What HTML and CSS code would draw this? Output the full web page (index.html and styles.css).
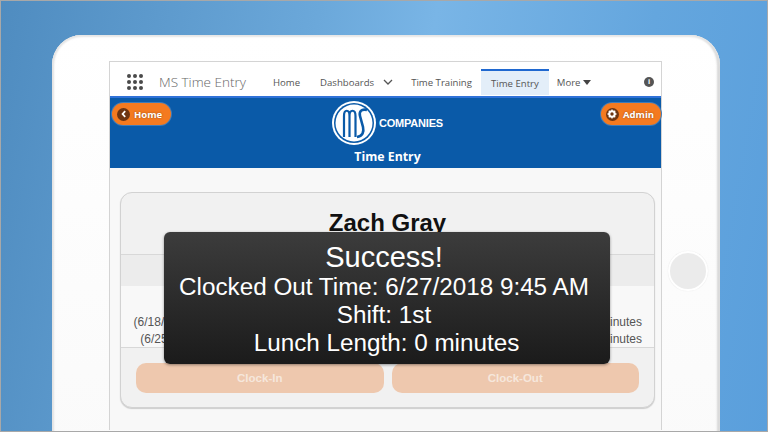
FILE: index.html
```html
<!DOCTYPE html>
<html lang="en">
<head>
    <meta charset="UTF-8">
    <meta name="viewport" content="width=device-width, initial-scale=1.0">
    <title>MS Time Entry</title>
    <link rel="stylesheet" href="styles.css">
</head>
<body>
    <div class="stage">
        <div class="tablet">
            <div class="screen">
                <nav class="nav">
                    <div class="launcher">
                        <i></i><i></i><i></i><i></i><i></i><i></i><i></i><i></i><i></i>
                    </div>
                    <span class="app-name">MS Time Entry</span>
                    <a class="nav-item nav-home">Home</a>
                    <a class="nav-item nav-dash">Dashboards
                        <svg class="chevron" width="10" height="6" viewBox="0 0 10 6"><path d="M1 1l4 4 4-4" fill="none" stroke="#555" stroke-width="1.3"/></svg>
                    </a>
                    <a class="nav-item nav-training">Time Training</a>
                    <a class="nav-item nav-active">Time Entry</a>
                    <a class="nav-item nav-more">More<span class="caret"></span></a>
                    <span class="info">i</span>
                </nav>
                <header class="banner">
                    <a class="pill pill-home">
                        <span class="pill-icon">
                            <svg width="8" height="8" viewBox="0 0 8 8"><path d="M5.2 1.2L2.6 4l2.6 2.8" fill="none" stroke="#fff" stroke-width="1.8"/></svg>
                        </span>Home</a>
                    <div class="brand">
                        <div class="brand-row">
                            <svg class="logo" width="44" height="44" viewBox="0 0 44 44">
                                <circle cx="22" cy="22" r="22" fill="#fff"/>
                                <circle cx="22" cy="22" r="20" fill="#0a5aa8"/>
                                <circle cx="22" cy="22" r="18.500" fill="#fff"/>
                                <path d="M12 36V15c0-7 5.500-7 5.500 0v21M17.500 15c0-7 6-7 6 0v21" fill="none" stroke="#0a5aa8" stroke-width="2.200"/>
                                <path d="M35 9c-6-1.500-8 2-7 6l3 11c1.200 5-.5 9.500-6 10" fill="none" stroke="#0a5aa8" stroke-width="2.600"/>
                            </svg>
                            <span class="brand-name">COMPANIES</span>
                        </div>
                        <h1 class="banner-title">Time Entry</h1>
                    </div>
                    <a class="pill pill-admin">
                        <span class="pill-icon">
                            <svg width="10" height="10" viewBox="0 0 10 10"><circle cx="5" cy="5" r="2.700" fill="none" stroke="#fff" stroke-width="2"/><path d="M5 .5v2M5 7.500v2M.5 5h2M7.500 5h2M1.800 1.800l1.400 1.400M6.800 6.800l1.400 1.400M8.200 1.800L6.800 3.200M3.200 6.800L1.800 8.200" stroke="#fff" stroke-width="1.300"/></svg>
                        </span>Admin</a>
                </header>
                <main class="content">
                    <section class="card">
                        <div class="card-name">Zach Gray</div>
                        <div class="card-band"></div>
                        <div class="card-weeks">
                            <span>(6/18/2018 - 6/24)</span><span>40 hours 0 minutes</span>
                            <span>(6/25/2018 - 7/1)</span><span>16 hours 0 minutes</span>
                        </div>
                        <div class="card-actions">
                            <button class="clock-btn">Clock-In</button>
                            <button class="clock-btn">Clock-Out</button>
                        </div>
                    </section>
                </main>
            </div>
            <div class="home-key"></div>
        </div>
        <div class="toast">
            <div class="toast-head">Success!</div>
            <div>Clocked Out Time: 6/27/2018 9:45 AM</div>
            <div>Shift: 1st</div>
            <div class="toast-last">Lunch Length: 0 minutes</div>
        </div>
    </div>
</body>
</html>
```

FILE: styles.css
```css
* { box-sizing: border-box; }
html, body { margin: 0; padding: 0; }
body { width: 768px; height: 432px; overflow: hidden; font-family: "Open Sans", sans-serif; }

.stage { position: relative; width: 768px; height: 432px; overflow: hidden; padding: 34px 0 0 51px; border: 1px solid #a8a8a8; background: linear-gradient(100deg, #4f8cc0 0%, #6ba8da 38%, #79b5e6 52%, #64a6de 78%, #5a9fdc 100%); }

.tablet { position: relative; width: 668px; height: 420px; padding: 26px 0 0 57px; background: linear-gradient(#fff, #fafafa); border-radius: 30px 30px 0 0; box-shadow: inset 0 2px 2px #e6e6e6, inset 2px 0 2px #e2e2e2, inset -3px 0 2px #d8d8d8; }
.screen { display: flex; flex-direction: column; width: 553px; height: 369px; background: #f8f8f8; border: 1px solid #d4d4d4; border-bottom: 0; }
.home-key { position: absolute; left: 616px; top: 216px; width: 40px; height: 40px; border-radius: 50%; background: #ebebeb; border: 2px solid #fff; box-shadow: 0 0 1px #ddd; }

.nav { display: flex; align-items: center; height: 34px; padding-top: 6px; background: #fff; flex: none; color: #555; font-size: 9.600px; }
.launcher { display: grid; grid-template-columns: repeat(3, 4px); gap: 2px; margin-left: 17px; }
.launcher i { width: 4px; height: 4px; border-radius: 50%; background: #4a4a4a; }
.app-name { margin-left: 16px; font-size: 13.500px; font-weight: 300; color: #666; white-space: nowrap; }
.nav-item { white-space: nowrap; }
.nav-home { margin-left: 27px; }
.nav-dash { margin-left: 20px; display: flex; align-items: center; }
.chevron { margin-left: 9px; }
.nav-training { margin-left: 18px; }
.nav-active { display: flex; align-items: center; align-self: flex-end; height: 26px; margin: 0 0 1px 9px; padding: 0 10px; background: #e3eef9; border-top: 2px solid #1f68d0; }
.nav-more { margin-left: 8px; }
.caret { display: inline-block; margin-left: 2px; border: 4px solid transparent; border-top: 5px solid #444; border-bottom: 0; vertical-align: 1px; }
.info { margin-left: auto; margin-right: 7px; width: 10px; height: 10px; border-radius: 50%; background: #555; color: #fff; font: 700 8px/10px "Liberation Sans", sans-serif; text-align: center; }

.banner { display: flex; align-items: flex-start; justify-content: space-between; height: 72px; flex: none; padding-top: 5px; background: #0a5aa8; border-top: 2px solid #2f72d8; }
.pill { display: flex; align-items: center; height: 22px; flex: none; color: #fff; font-size: 9.500px; font-weight: 700; background: #f47a20; text-shadow: 0 0 2px #8a4a18; box-shadow: 0 0 0 1px #3f7cb8; }
.pill-home { width: 59px; margin-left: 2px; padding-left: 5px; border-radius: 11px; }
.pill-admin { width: 60px; padding-left: 5px; border-radius: 11px; }
.pill-icon { display: flex; align-items: center; justify-content: center; width: 13px; height: 13px; margin-right: 4px; border-radius: 50%; background: #6e3512; }
.brand { display: flex; flex-direction: column; align-items: center; margin: -2px 0 0 3px; }
.brand-row { display: flex; align-items: center; height: 44px; }
.brand-name { margin-left: 3px; color: #fff; font: 700 11px "Liberation Sans", sans-serif; letter-spacing: -.2px; }
.banner-title { margin: 4px 0 0 0; color: #fff; font-size: 12.300px; font-weight: 700; line-height: 16px; }

.content { flex: 1; padding: 24px 6px 0 10px; }
.card { display: flex; flex-direction: column; height: 216px; background: #f1f1f1; border: 1px solid #d2d2d2; border-radius: 12px; box-shadow: 0 1px 1px #ccc; color: #555; font-family: "Liberation Sans", sans-serif; overflow: hidden; }
.card-name { height: 62px; padding-top: 17px; text-align: center; color: #111; font-size: 24px; font-weight: 700; line-height: 26px; border-bottom: 1px solid #d8d8d8; }
.card-band { height: 31px; background: #ececec; }
.card-weeks { display: grid; grid-template-columns: 108px 1fr; grid-auto-rows: 17px; height: 62px; padding: 28px 12px 0 0; background: #f8f8f8; font-size: 12px; line-height: 17px; text-align: right; border-bottom: 1px solid #d8d8d8; }
.card-actions { display: flex; gap: 8px; flex: 1; padding: 15px 15px 0; }
.clock-btn { flex: 1; height: 30px; padding: 0; border: 0; border-radius: 10px; background: #eec8ae; color: #f6e7dc; font: 700 11.500px "Liberation Sans", sans-serif; }

.toast { position: absolute; left: 163px; top: 231px; width: 446px; height: 132px; padding: 10px 6px 0 0; border-radius: 6px; background: linear-gradient(#3c3c3c, #1b1b1b); box-shadow: 0 1px 3px rgba(0, 0, 0, .4); color: #fff; font: 24.250px/28px "Liberation Sans", sans-serif; text-align: center; }
.toast-head { font-size: 29px; line-height: 31px; }
.toast-last { padding-left: 5px; }
```
